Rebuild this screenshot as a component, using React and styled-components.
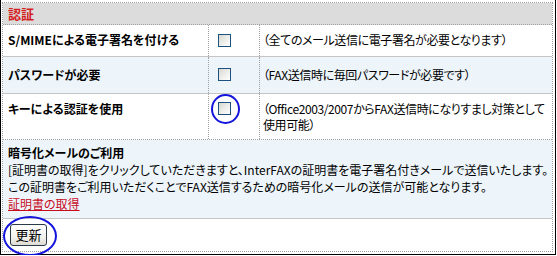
import styled, { createGlobalStyle } from "styled-components"

const Global = createGlobalStyle`
    body{
        margin: 0;
        background: #fff;
        font-family: "Noto Sans CJK JP", "Noto Sans", sans-serif;
        font-size: 12px;
        color: #000;
    }
`

const Frame = styled.div`
    position: relative;
    box-sizing: border-box;
    width: 556px;
    height: 255px;
    border: 1px solid #000;
    border-top: none;
    padding: 2px 2px 2px 1px;
    font-feature-settings: "palt";
`

const Table = styled.div`
    box-sizing: border-box;
    height: 100%;
    border: 1px dotted #a0a0a0;
    display: flex;
    flex-direction: column;
`

const Header = styled.div`
    height: 21px;
    line-height: 21px;
    padding-left: 5px;
    background: #dcdcdc;
    color: #d41e1e;
    font-weight: bold;
    font-size: 13px;
    border-bottom: 1px dotted #a0a0a0;
`

const Row = styled.div`
    display: grid;
    grid-template-columns: 205px 51px 1fr;
    height: ${p => p.$h}px;
    background: ${p => p.$alt ? "#edf5fb" : "#fff"};
    border-top: ${p => p.$alt ? "1px solid #c4c4c4" : "none"};
    border-bottom: ${p => p.$alt ? "1px solid #c4c4c4" : p.$dotted ? "1px dotted #a0a0a0" : "none"};
    line-height: 16px;

    & > div{
        display: flex;
        align-items: ${p => p.$top ? "flex-start" : "center"};
        padding-top: ${p => p.$top ? "7px" : "0"};
    }
`

const Label = styled.div`
    padding-left: 5px;
    font-weight: bold;
`

const CheckCell = styled.div`
    border-left: 1px dotted #a0a0a0;
    padding-left: 9px;
`

const CheckWrap = styled.span`
    position: relative;
    display: flex;
    align-items: center;
    height: 16px;

    &::after{
        content: "";
        display: ${p => p.$marked ? "block" : "none"};
        position: absolute;
        left: -7px;
        top: -7px;
        width: 29px;
        height: 30px;
        box-sizing: border-box;
        border: 2px solid #1414dc;
        border-radius: 50%;
    }
`

const Check = styled.input`
    appearance: none;
    margin: 0;
    width: 13px;
    height: 13px;
    box-sizing: border-box;
    border: 1px solid #1c5180;
    background: linear-gradient(135deg, #d8d8d2 0%, #f4f4f2 70%, #fff 100%);
`

const Note = styled.div`
    border-left: 1px dotted #a0a0a0;
    padding-left: 3px;
    white-space: nowrap;
    letter-spacing: -0.4px;
`

const Crypto = styled.div`
    box-sizing: border-box;
    height: 79px;
    padding: 4px 5px 0;
    background: #edf5fb;
    border-bottom: 1px solid #c4c4c4;
    line-height: 17px;

    h4{
        margin: 0;
        font-size: 12px;
        font-weight: bold;
    }
    p{
        margin: 0;
        white-space: nowrap;
    }
    a{
        color: #c80a1e;
        text-decoration: underline;
    }
`

const Footer = styled.div`
    padding: 5px 7px;
`

const ButtonWrap = styled.span`
    position: relative;
    display: inline-block;

    &::after{
        content: "";
        position: absolute;
        left: -7px;
        top: -8px;
        width: 54px;
        height: 40px;
        box-sizing: border-box;
        border: 2px solid #1414dc;
        border-radius: 50%;
        pointer-events: none;
    }
`

const Button = styled.button`
    display: block;
    width: 37px;
    height: 22px;
    padding: 0;
    border: 1px solid #2b3a4a;
    border-radius: 3px;
    background: linear-gradient(#ffffff 0%, #f3f2ee 60%, #dedbd2 100%);
    font-family: inherit;
    font-size: 13px;
    color: #000;
    line-height: 20px;
`

const settings = [
    { label: "S/MIMEによる電子署名を付ける", note: "（全てのメール送信に電子署名が必要となります）", h: 31 },
    { label: "パスワードが必要", note: "（FAX送信時に毎回パスワードが必要です）", h: 36, alt: true },
    { label: "キーによる認証を使用", note: <>（Office2003/2007からFAX送信時になりすまし対策として<br />使用可能）</>, h: 46, top: true, dotted: true, marked: true },
]

export default function App() {
    return (
        <>
            <Global />
            <Frame>
                <Table>
                    <Header>認証</Header>
                    {settings.map((s, i) => (
                        <Row key={i} $h={s.h} $alt={s.alt} $top={s.top} $dotted={s.dotted}>
                            <Label>{s.label}</Label>
                            <CheckCell>
                                <CheckWrap $marked={s.marked}>
                                    <Check type="checkbox" />
                                </CheckWrap>
                            </CheckCell>
                            <Note>{s.note}</Note>
                        </Row>
                    ))}
                    <Crypto>
                        <h4>暗号化メールのご利用</h4>
                        <p>[証明書の取得]をクリックしていただきますと、InterFAXの証明書を電子署名付きメールで送信いたします。</p>
                        <p>この証明書をご利用いただくことでFAX送信するための暗号化メールの送信が可能となります。</p>
                        <a href="#">証明書の取得</a>
                    </Crypto>
                    <Footer>
                        <ButtonWrap>
                            <Button>更新</Button>
                        </ButtonWrap>
                    </Footer>
                </Table>
            </Frame>
        </>
    )
}
